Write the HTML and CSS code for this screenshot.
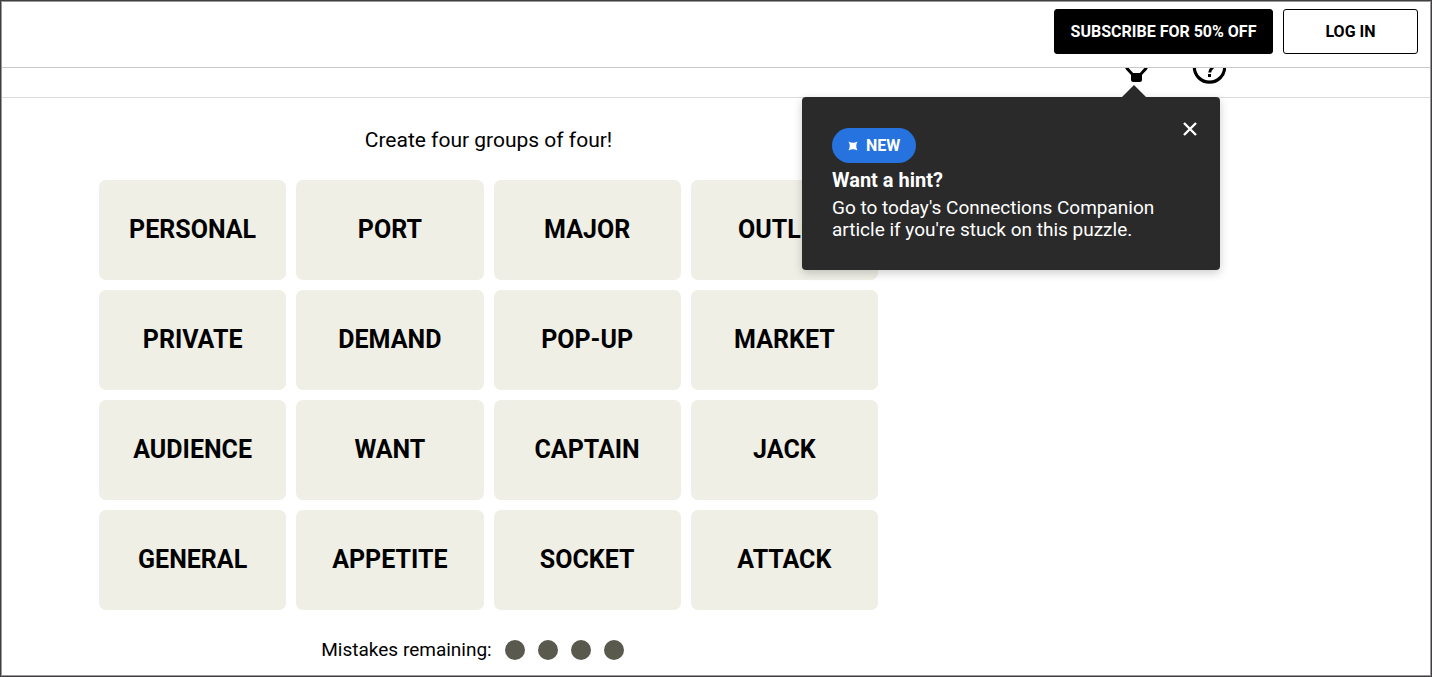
FILE: index.html
```html
<!DOCTYPE html>
<html lang="en">
<head>
    <meta charset="UTF-8">
    <meta name="viewport" content="width=device-width, initial-scale=1.0">
    <title>Connections</title>
    <link rel="stylesheet" href="styles.css">
</head>
<body>
<div class="page">
    <header class="site-header">
        <button type="button" class="btn btn-dark">SUBSCRIBE FOR 50% OFF</button>
        <button type="button" class="btn btn-light">LOG IN</button>
    </header>

    <!-- toolbar slides under the header -->
    <div class="toolbar">
        <div class="hint">
            <button type="button" class="icon-btn" aria-label="Hint">
                <svg width="34" height="34" viewBox="0 0 34 34">
                    <path d="M14 25.500C13 22 5 19 5 10a12.500 12.500 0 0 1 25 0c0 9-8 12-9 15.500" fill="none" stroke="#000" stroke-width="3"/>
                    <path d="M12 23h11v6.500a2.500 2.500 0 0 1-2.500 2.500h-6a2.500 2.500 0 0 1-2.500-2.500z"/>
                </svg>
            </button>
            <div class="popover" role="dialog" aria-labelledby="hint-title">
                <button type="button" class="close" aria-label="Close">
                    <svg width="14" height="14" viewBox="0 0 14 14">
                        <path d="M1 1l12 12M13 1L1 13" stroke="#fff" stroke-width="2.400"/>
                    </svg>
                </button>
                <span class="badge">
                    <svg width="10" height="10" viewBox="0 0 10 10">
                        <path d="M0.500 0.500Q5 3 9.500 0.500Q7 5 9.500 9.500Q5 7 0.500 9.500Q3 5 0.500 0.500z" fill="#fff"/>
                    </svg>
                    NEW
                </span>
                <h2 class="popover-title" id="hint-title">Want a hint?</h2>
                <p class="popover-text">Go to today's Connections Companion article if you're stuck on this puzzle.</p>
            </div>
        </div>
        <button type="button" class="icon-btn" aria-label="Help">
            <svg width="34" height="34" viewBox="0 0 34 34">
                <circle cx="17.500" cy="17" r="15.200" fill="none" stroke="#000" stroke-width="3.200"/>
                <path d="M12.500 13.500a5 5 0 1 1 8.500 3.700c-2 1.700-3.300 2.300-3.300 5.300" fill="none" stroke="#000" stroke-width="3"/>
                <path d="M16 24h3v3h-3z"/>
            </svg>
        </button>
    </div>

    <main class="game">
        <p class="instruction">Create four groups of four!</p>
        <div class="board">
            <button type="button" class="tile">PERSONAL</button>
            <button type="button" class="tile">PORT</button>
            <button type="button" class="tile">MAJOR</button>
            <button type="button" class="tile">OUTLET</button>
            <button type="button" class="tile">PRIVATE</button>
            <button type="button" class="tile">DEMAND</button>
            <button type="button" class="tile">POP-UP</button>
            <button type="button" class="tile">MARKET</button>
            <button type="button" class="tile">AUDIENCE</button>
            <button type="button" class="tile">WANT</button>
            <button type="button" class="tile">CAPTAIN</button>
            <button type="button" class="tile">JACK</button>
            <button type="button" class="tile">GENERAL</button>
            <button type="button" class="tile">APPETITE</button>
            <button type="button" class="tile">SOCKET</button>
            <button type="button" class="tile">ATTACK</button>
        </div>
        <div class="mistakes">
            <span class="mistakes-label">Mistakes remaining:</span>
            <span class="dot"></span>
            <span class="dot"></span>
            <span class="dot"></span>
            <span class="dot"></span>
        </div>
    </main>
</div>
</body>
</html>
```

FILE: styles.css
```css
* {
    box-sizing: border-box;
}
body {
    margin: 0;
    font-family: Roboto, "Liberation Sans", sans-serif;
    color: #000;
    background: #fff;
}
button {
    font-family: inherit;
    color: inherit;
    padding: 0;
    border: none;
    background: none;
    cursor: pointer;
}
svg {
    display: block;
}
.page {
    min-height: 100vh;
    padding: 1px;
    border: 1px solid #403e40;
    box-shadow: inset 0 0 0 1px #9b9a9b;
}

/* header */
.site-header {
    position: relative;
    z-index: 2;
    display: flex;
    justify-content: flex-end;
    gap: 10px;
    padding: 7px 12px 13px;
    background: #fff;
    border-bottom: 1px solid #c8c8c8;
}
.btn {
    height: 45px;
    border: 1px solid #000;
    border-radius: 3px;
    font-size: 16px;
    font-weight: 700;
}
.btn-dark {
    min-width: 219px;
    background: #000;
    color: #fff;
}
.btn-light {
    min-width: 135px;
    background: #fff;
}

/* toolbar */
.toolbar {
    display: flex;
    justify-content: flex-end;
    gap: 39px;
    margin-top: -24px;
    padding: 6px 204px 13px 0;
    border-bottom: 1px solid #dcdcdc;
}
.icon-btn {
    display: block;
    width: 34px;
    height: 34px;
}
.hint {
    position: relative;
}

/* hint popover */
.popover {
    position: absolute;
    z-index: 3;
    top: 47px;
    right: -67px;
    width: 418px;
    padding: 31px 30px 29px;
    border-radius: 4px;
    background: #2a2a2a;
    color: #fff;
    box-shadow: 0 3px 10px rgba(0, 0, 0, 0.2);
}
.popover::before {
    content: "";
    position: absolute;
    top: -12px;
    right: 74px;
    border: 12px solid transparent;
    border-top: none;
    border-bottom-color: #2a2a2a;
}
.close {
    position: absolute;
    top: 20px;
    right: 18px;
    padding: 5px;
}
.badge {
    display: inline-flex;
    align-items: center;
    gap: 8px;
    height: 35px;
    padding: 0 16px;
    border-radius: 18px;
    background: #2672de;
    font-size: 16px;
    font-weight: 700;
    vertical-align: top;
}
.popover-title {
    margin: 6px 0;
    font-size: 20px;
    line-height: 22px;
}
.popover-text {
    margin: 0;
    font-size: 19px;
    line-height: 22px;
}

/* game */
.game {
    max-width: 876px;
    padding: 30px 0 15px 97px;
}
.instruction {
    margin: 0 0 28px;
    font-size: 21px;
    line-height: 24px;
    text-align: center;
}
.board {
    display: grid;
    grid-template-columns: repeat(4, 1fr);
    gap: 10px;
}
.tile {
    height: 100px;
    padding-bottom: 2px;
    border-radius: 7px;
    background: #efefe6;
    font-size: 25px;
    font-weight: 700;
}
.mistakes {
    display: flex;
    align-items: center;
    justify-content: center;
    gap: 13px;
    margin-top: 30px;
    padding-right: 32px;
}
.mistakes-label {
    font-size: 19px;
    line-height: 20px;
}
.dot {
    width: 20px;
    height: 20px;
    border-radius: 50%;
    background: #5a594e;
}
```
